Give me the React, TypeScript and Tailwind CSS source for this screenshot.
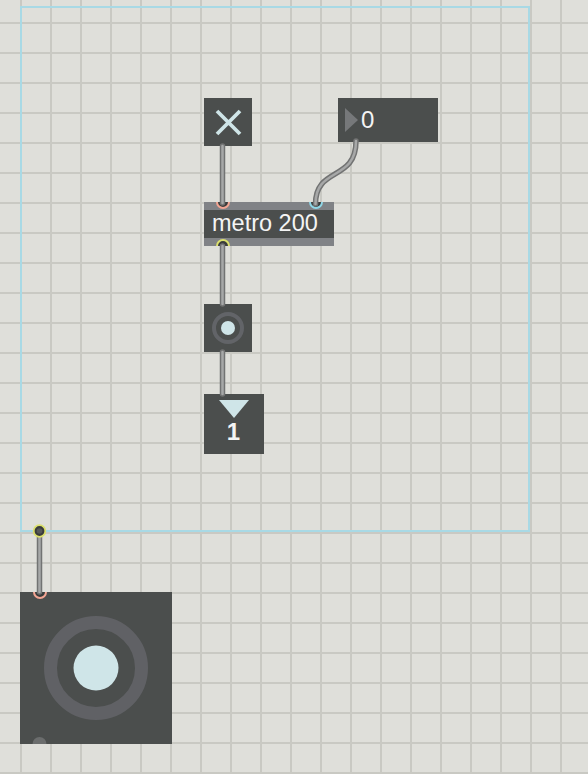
import React from "react";

const FONT = { fontFamily: '"Liberation Sans", Arial, sans-serif' };

function Inlet({ left, color, bottom }: { left: number; color: string; bottom?: boolean }) {
  return (
    <div
      className={`absolute w-[14px] h-[14px] rounded-full border-2 bg-[#3a3c3c] ${bottom ? "bottom-[-7px]" : "top-[-7px]"}`}
      style={{ left, borderColor: color }}
    />
  );
}

export default function App() {
  return (
    <div
      className="relative w-[588px] h-[774px] overflow-hidden bg-[#dfdfda] [background-image:linear-gradient(to_right,#c9c9c3_2px,transparent_2px),linear-gradient(to_bottom,#c9c9c3_2px,transparent_2px)] [background-size:30px_30px] [background-position:20px_22px]"
      style={FONT}
    >
      {/* blue outline */}
      <div className="absolute left-[20px] top-[6px] w-[510px] h-[526px] border-2 border-[#a8d9e5]" />

      {/* toggle */}
      <div className="absolute left-[204px] top-[98px] w-[48px] h-[48px] bg-[#4b4e4d] flex items-center justify-center">
        <svg width="27" height="27" viewBox="0 0 27 27">
          <path d="M2 2 L25 25 M25 2 L2 25" stroke="#cfe5e8" strokeWidth="3.8" strokeLinecap="butt" />
        </svg>
      </div>

      {/* number box 0 */}
      <div className="absolute left-[338px] top-[98px] w-[100px] h-[44px] bg-[#4b4e4d]">
        <svg className="absolute left-0 top-0" width="30" height="44" viewBox="0 0 30 44">
          <polygon points="7,10 7,34 20,22" fill="#76787a" />
        </svg>
        <span className="absolute left-[23px] top-0 h-[44px] flex items-center text-[24px] leading-none text-[#f4f4f4]">0</span>
      </div>

      {/* metro 200 */}
      <div className="absolute left-[204px] top-[202px] w-[130px] h-[44px] bg-[#4b4e4d] overflow-hidden flex flex-col">
        <div className="h-[8px] bg-[#808286]" />
        <div className="flex-1 flex items-center pl-[8px] text-[23.5px] leading-none text-[#f4f4f4]">metro 200</div>
        <div className="h-[8px] bg-[#808286]" />
        <Inlet left={11.5} color="#f3a593" />
        <Inlet left={104.5} color="#8fd6e6" />
        <Inlet left={11.5} color="#dbe06c" bottom />
      </div>

      {/* button */}
      <div className="absolute left-[204px] top-[304px] w-[48px] h-[48px] bg-[#4b4e4d]">
        <svg width="48" height="48" viewBox="0 0 48 48">
          <circle cx="24" cy="24" r="14" fill="none" stroke="#626468" strokeWidth="4" />
          <circle cx="24" cy="24" r="7" fill="#cfe5e8" />
        </svg>
      </div>

      {/* number box 1 */}
      <div className="absolute left-[204px] top-[394px] w-[60px] h-[60px] bg-[#4b4e4d]">
        <svg className="absolute left-0 top-0" width="60" height="30" viewBox="0 0 60 30">
          <polygon points="15,6 45,6 30,24" fill="#cfe5e8" />
        </svg>
        <span className="absolute left-0 right-[1px] top-[28px] h-[20px] flex items-center justify-center text-[24px] font-bold leading-none text-[#f4f4f4]">1</span>
      </div>

      {/* big bang */}
      <div className="absolute left-[20px] top-[592px] w-[152px] h-[152px] bg-[#4b4e4d] overflow-hidden">
        <svg width="152" height="152" viewBox="0 0 152 152">
          <circle cx="76" cy="76" r="45.5" fill="none" stroke="#606165" strokeWidth="13" />
          <circle cx="76" cy="76" r="22.5" fill="#cfe5e8" />
          <circle cx="19.5" cy="152" r="7" fill="#6b6d6d" />
        </svg>
        <Inlet left={12.5} color="#f3a593" />
      </div>

      {/* patch cords */}
      <svg className="absolute left-0 top-0 pointer-events-none" width="588" height="774" viewBox="0 0 588 774">
        <g fill="none" strokeLinecap="round">
          <g stroke="#727373" strokeWidth="5.5">
            <path d="M222.5 146 L222.5 203" />
            <path d="M356 141 C356 182 315.5 166 315.5 204" />
            <path d="M222.5 246 L222.5 304" />
            <path d="M222.5 352 L222.5 394" />
            <path d="M39.5 531 L39.5 592" />
          </g>
          <g stroke="#a7a8a8" strokeWidth="2.5">
            <path d="M222.5 146 L222.5 203" />
            <path d="M356 141 C356 182 315.5 166 315.5 204" />
            <path d="M222.5 246 L222.5 304" />
            <path d="M222.5 352 L222.5 394" />
            <path d="M39.5 533 L39.5 592" />
          </g>
        </g>
        <circle cx="39.5" cy="531" r="5.8" fill="#3a3c3c" stroke="#dbe06c" strokeWidth="1.8" />
        <circle cx="39.5" cy="531" r="2.8" fill="#555757" />
      </svg>
    </div>
  );
}
